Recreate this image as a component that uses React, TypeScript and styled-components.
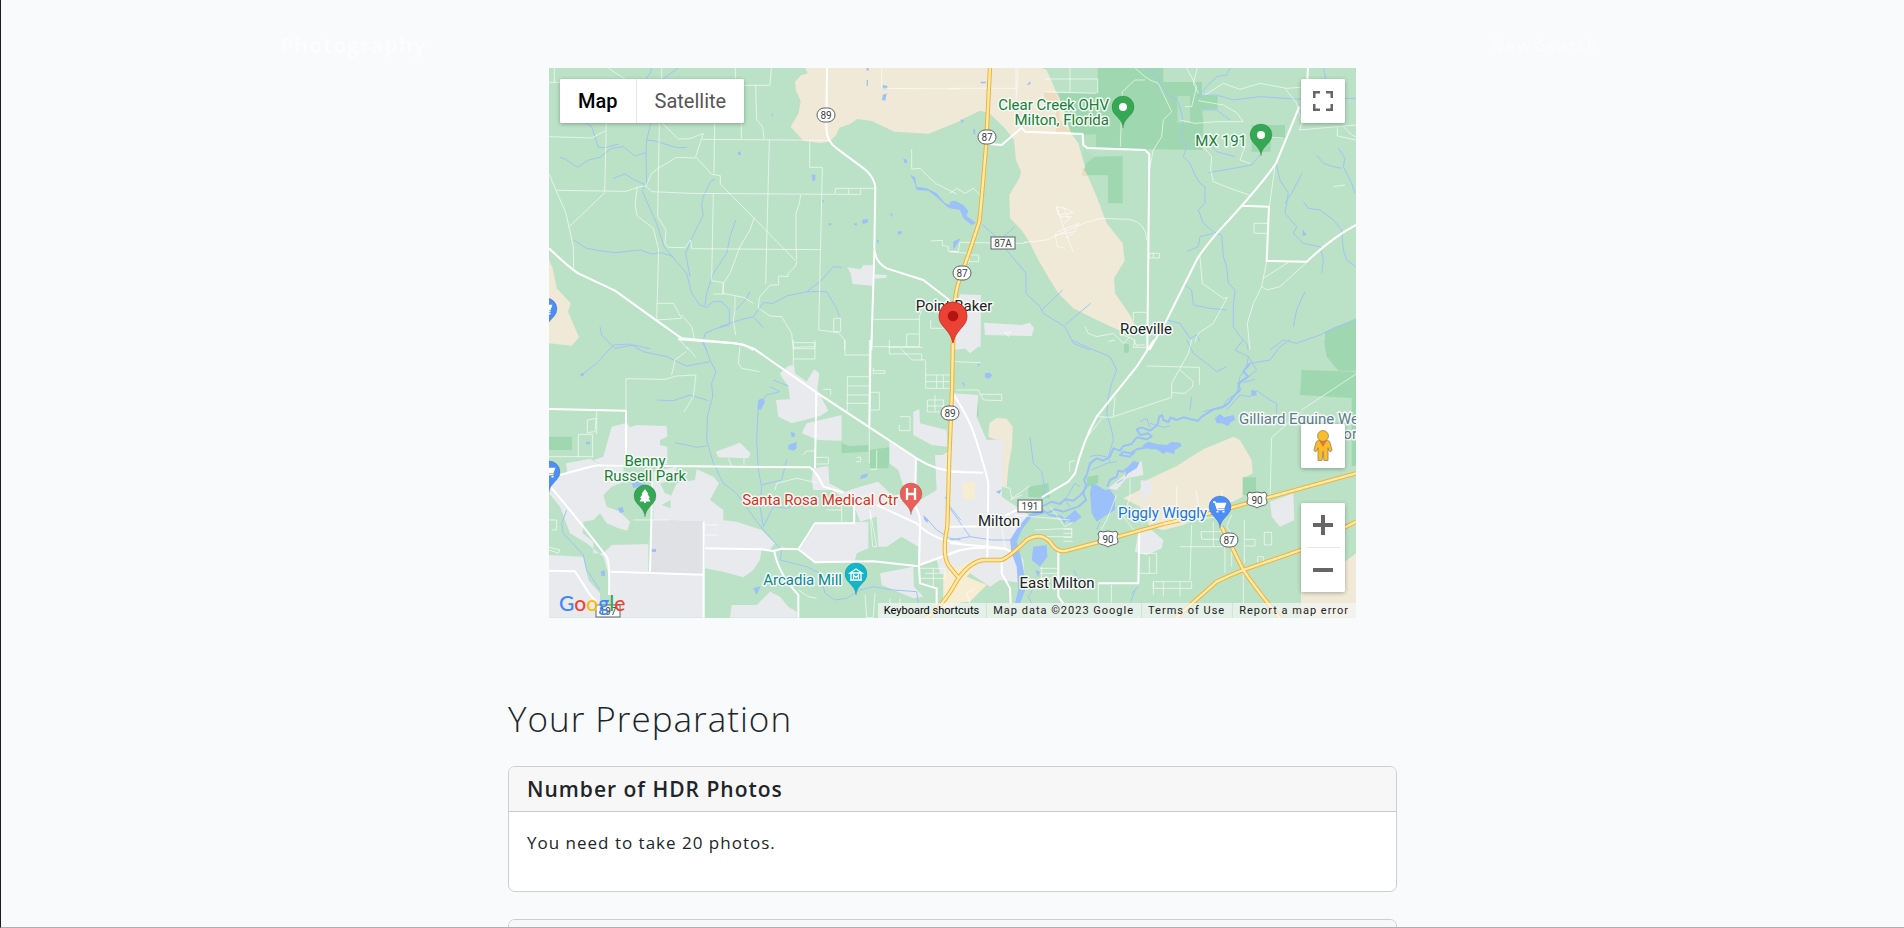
import React from "react";
import styled, { createGlobalStyle } from "styled-components";

const GlobalStyle = createGlobalStyle`
  *, *::before, *::after { box-sizing: border-box; }
  body {
    margin: 0;
    background: #f8fafc;
    color: #212529;
    font-family: "Open Sans", "Noto Sans", sans-serif;
    font-size: 17px;
    line-height: 28px;
    letter-spacing: 1px;
  }
`;

const Page = styled.div`
  position: relative;
  height: 100vh;
  overflow: hidden;
  border-left: 1px solid #1b1b20;
  border-bottom: 1px solid #b0aeb6;
`;

const Header = styled.header`
  display: flex;
  align-items: center;
  justify-content: space-between;
  max-width: 1345px;
  height: 68px;
  margin: 0 auto;
  padding: 22px 27px 0 0;
`;

const Brand = styled.a`
  color: #fcfdfc;
  font-size: 21px;
  font-weight: 700;
  text-decoration: none;
`;

const NavLink = styled.a`
  color: #fcfdfc;
  font-weight: 600;
  text-decoration: none;
`;

const Main = styled.main`
  max-width: 889px;
  margin: 0 auto;
`;

const MapFrame = styled.section`
  position: relative;
  max-width: 807px;
  height: 550px;
  margin: 0 auto 78px;
  overflow: hidden;
  background: #bbe2c6;
  font-family: Roboto, sans-serif;
`;

const MapCanvas = styled.svg`
  display: block;
  width: 100%;
  height: 100%;
  letter-spacing: 0;
`;

const ControlBox = styled.div`
  display: flex;
  overflow: hidden;
  border-radius: 2px;
  background: #fff;
  box-shadow: 0 1px 4px rgba(0, 0, 0, 0.3);
`;

const TypeControls = styled(ControlBox)`
  position: absolute;
  top: 11px;
  left: 11px;
`;

const TypeButton = styled.button<{ $active?: boolean }>`
  height: 44px;
  padding: 0 18px;
  border: 0;
  border-left: ${(p) => (p.$active ? "0" : "1px solid #e6e6e6")};
  background: #fff;
  color: ${(p) => (p.$active ? "#000" : "#565656")};
  font-family: Roboto, sans-serif;
  font-size: 20px;
  font-weight: ${(p) => (p.$active ? 500 : 400)};
`;

const IconButton = styled.button`
  display: grid;
  place-items: center;
  width: 44px;
  height: 44px;
  padding: 0;
  border: 0;
  background: #fff;
`;

const TopRight = styled.div`
  position: absolute;
  top: 11px;
  right: 11px;
`;

const BottomRight = styled.div`
  position: absolute;
  right: 11px;
  bottom: 26px;
  display: flex;
  flex-direction: column;
  gap: 35px;
`;

const ZoomBox = styled(ControlBox)`
  flex-direction: column;
`;

const Divider = styled.hr`
  width: 33px;
  height: 1px;
  margin: 0 auto;
  border: 0;
  background: #e6e6e6;
`;

const GoogleLink = styled.a`
  position: absolute;
  left: 10px;
  bottom: 2px;
  display: flex;
  font-family: Lato, sans-serif;
  font-size: 21px;
  font-weight: 500;
  line-height: 26px;
  letter-spacing: 0;
  text-decoration: none;
`;

const Letter = styled.span<{ $color: string }>`
  color: ${(p) => p.$color};
`;

const Attribution = styled.footer`
  position: absolute;
  right: 0;
  bottom: 0;
  display: flex;
  height: 15px;
  background: rgba(245, 245, 245, 0.72);
  font-size: 11px;
  line-height: 15px;
`;

const ShortcutButton = styled.button`
  padding: 0 7px 0 6px;
  border: 0;
  background: none;
  color: #000;
  font: inherit;
  letter-spacing: 0;
`;

const Credit = styled.span`
  padding: 0 7px 0 6px;
  border-left: 1px solid #cfe6d7;
  color: #222;
`;

const CreditLink = styled.a`
  padding: 0 7px 0 6px;
  border-left: 1px solid #cfe6d7;
  color: #222;
  text-decoration: none;
`;

const Title = styled.h2`
  margin: 0 0 25px;
  font-size: 35px;
  font-weight: 300;
  line-height: 45px;
`;

const Card = styled.article`
  min-height: 126px;
  margin-bottom: 27px;
  overflow: hidden;
  border: 1px solid #cdcecf;
  border-radius: 7px;
  background: #fff;
`;

const CardHeader = styled.h3`
  min-height: 45px;
  margin: 0;
  padding: 8px 18px;
  border-bottom: 1px solid #cacaca;
  background: #f7f7f7;
  font-size: 21px;
  font-weight: 600;
  line-height: 28px;
`;

const CardText = styled.p`
  margin: 0;
  padding: 17px 18px;
  font-weight: 400;
`;

/* The terrain is traced in four sheets, each drawn at three units per pixel. */
type Sheet = "nw" | "ne" | "sw" | "se";
const origin: Record<Sheet, string> = {
  nw: "translate(-9 -8) scale(.333333)",
  ne: "translate(401 -8) scale(.333333)",
  sw: "translate(-9 272) scale(.333333)",
  se: "translate(401 272) scale(.333333)",
};
type Layer = Partial<Record<Sheet, string>>;

const sand: Layer = {
  nw: "M795 24L803 40 783 46 765 66 768 92 782 122 776 160 752 200 790 242 840 249 868 245 888 226 898 203 930 192 952 177 995 183 1064 215 1166 221 1262 182V24ZM27 600L38 625 50 685 92 730 84 755 117 832 95 857 27 850Z",
  ne: "M0 24V195L90 152 118 160 165 205 192 240 198 300 213 335 208 355 178 405 180 475 215 510 240 550 265 600 300 660 325 700 370 745 440 780 510 812 555 795 540 765 495 700 492 655 524 602 518 550 470 490 440 410 410 340 385 250 360 215 355 180 325 110 290 30 275 24Z",
  sw: "M27 0H105L95 12 27 6Z",
  se: "M115 290L118 250 140 234 170 236 188 260 186 320 175 380 170 440 155 440 158 300 135 298ZM520 475L570 450 580 425 680 378 760 328 850 290 870 300 905 360 908 400 880 415 878 470 840 490 790 510 700 555 640 570 600 560 570 500ZM1053 833V750L1100 730 1218 640V833Z",
};
const tan: Layer = {
  ne: "M283 95L320 100 330 180 362 216H318V150L283 135ZM398 320L412 346H396Z",
};
const urban: Layer = {
  nw: "M922 622L962 628 970 616 998 615V677L938 672 932 640ZM1004 643L1040 645V653L1004 656Z",
  ne: "M30 703L93 705 92 860 10 870V760ZM102 788L215 795 240 788 252 805 245 828 105 825Z",
  sw: "M720 100L745 78 762 75 765 100 800 125 822 88 838 100 832 150 865 212 840 228 755 250 715 230 708 180 750 178 745 140 725 110ZM785 280L800 250 905 225V302L835 300ZM527 335L600 308 632 340 625 355 535 352ZM160 360L190 350 215 260 260 248 270 262 290 255 380 258 382 290 360 300V315L382 320V372H180ZM78 370L150 356 185 376H250L252 425 215 440 190 465 200 500 240 515 270 545 262 572 235 565 200 550 180 520 160 540 130 545 128 580 160 605V640H190L215 615 325 612V692L490 700V833H215L205 700 190 650 140 610 90 580 60 500 27 460V420L82 400ZM340 395L410 380 405 420 360 430 375 460 392 465V480L365 495 392 505V540H545L590 545 665 570 705 610 690 628 495 625 490 545 340 540ZM410 430L465 420 470 388 520 410 537 430 510 480 550 510V540H392V470ZM27 645L130 650 145 720 180 760V833H27ZM495 625L665 628 660 660 640 690 610 712 550 695 495 685ZM570 833L575 795 650 795 690 755 720 770 745 800 770 815V833ZM820 385L865 378 868 430 915 455 960 440 1015 425 1060 470 1090 455 1140 480 1190 450 1185 345H1228L1262 400V690L1200 700 1190 660 1135 680V620L1085 590 1040 620H1015L1010 530 960 545 940 490 875 450 820 450 815 420ZM805 590L830 550 985 545V625L950 640 945 662 820 665 780 628ZM1120 215L1138 208 1140 250 1220 270 1222 320 1175 315 1120 285ZM1048 305L1125 355 1128 440H1090L1075 390 1048 370ZM1020 700L1120 680 1122 740 1150 770 1120 775 1025 735Z",
  se: "M10 160L85 165 80 230 110 300 160 298 155 470 200 500 245 530 180 600 220 660 225 730 150 720 120 740 60 700 -30 700V350L0 330ZM30 0H90L88 18 60 40 45 25ZM572 420L605 425 602 465 580 475 575 560ZM565 575L605 570 640 600 635 625 590 645 555 635ZM960 485L1030 460 1033 540 990 560 965 530ZM475 445L575 362 580 405 530 415 500 450Z",
};
const airport: Layer = { sw: "M333 540L492 545V705L330 698Z" };
const downtown: Layer = {
  sw: "M1215 720L1250 690 1262 790 1150 833 1210 780Z",
  se: "M38 430L75 425V480L38 475ZM-20 700L70 660 75 680 50 710 110 735 60 785 -20 790Z",
};
const parks: Layer = {
  ne: "M443 24H640V66H756V148L760 185 758 270 600 268 410 262 400 225 362 217 350 180 325 100H443ZM433 290L518 288V430H474V346H398L408 310ZM905 195H1005V235H962V275H905ZM756 108H803V148H756ZM1125 870V815L1218 775V870ZM522 855H536V870H522Z",
  sw: "M27 290H96V330H27ZM905 308L925 318 985 315V335L905 340ZM988 330L1055 320 1045 385 990 385ZM275 400H330V425H280ZM1155 590L1180 575 1184 600 1175 625Z",
  se: "M1055 90L1218 95V175L1050 165ZM1122 0H1218V92H1165L1130 50ZM878 412H918V465H878ZM55 190H85V230L60 222ZM235 440L295 430 300 475 235 470ZM522 12H536V38H522ZM1205 175H1218V378H1205ZM410 410L445 405V430L412 440ZM0 310L18 315V352H0ZM40 312L60 305 75 330 40 335ZM50 642H68V658H50Z",
};
const clearings: Layer = {
  ne: "M682 108H720V188H682ZM400 265L433 290 404 310ZM438 222V262H410L400 225Z",
};
const lakes: Layer = {
  nw: "M1110 345L1125 352 1130 380 1160 385 1190 400 1215 430 1230 435 1240 422 1260 430V445L1225 443 1190 412 1165 392 1130 390 1122 362ZM815 345L826 343V360L817 363ZM966 480L985 476 982 488 968 492ZM1072 515L1085 513V521L1076 524ZM1090 295L1100 300 1102 310 1093 308ZM1028 75L1043 78 1040 88H1028ZM1028 105L1040 100 1036 122 1026 120ZM1240 545L1262 535 1242 568ZM594 275H602V285H594ZM1010 538L1017 542 1014 553ZM1050 460L1058 463 1055 472ZM943 490H951V496H943ZM866 490H874V496H866ZM695 160L702 167H695ZM980 60H984V78H980ZM980 24H986V32H980ZM845 418L852 422 849 429Z",
  ne: "M0 425L15 422 40 435 55 452 50 468 78 488 65 495 40 475 30 450 0 445ZM10 545L22 540 10 570ZM230 76L240 64 242 72ZM92 65H108V70H92ZM1058 508L1070 525 1058 527ZM32 178L42 182 34 190ZM70 205L76 210V225L70 220Z",
  sw: "M655 180L668 175 675 185 662 210 652 205ZM752 275L765 280V290L755 292ZM745 315L770 305V325L760 332 745 328ZM120 102L130 98 132 106 123 110ZM234 505L248 500 252 515 240 520ZM275 430L292 425 325 435 328 445 300 438 280 445ZM335 627H348V636H335ZM965 405L985 400 980 412 960 418ZM1150 525L1165 540 1162 548 1153 540ZM640 745L662 738 650 765ZM138 305H150V313H138ZM182 695L195 690 195 708H184Z",
  se: "M425 430L440 435 465 450 480 448 495 470V510L470 525 440 545 425 520 420 460ZM250 620L290 615 292 650 270 680 245 660ZM575 318L595 305 620 312 650 315 665 305 690 308 695 318 675 330 672 342 650 335 640 342 620 328 600 328ZM180 600L205 560 235 525 275 505 285 520 245 530 215 570 200 605 215 660 230 740 210 790 195 790 205 750 200 680 185 640ZM795 235L810 222 822 232 850 225 855 240 840 248 835 258 815 250 800 250ZM340 540L375 510 395 530 370 550ZM530 385L550 362 568 368 560 385 535 400 525 412ZM105 100L120 98 127 107 115 116 105 112ZM138 455L155 448 148 462ZM255 690L270 695 265 712ZM85 70L90 74 84 82ZM36 130L42 125 44 142ZM903 150L918 152 920 166 906 168Z",
};
const streams: Layer = {
  nw: "M320 375L318 280 320 240 332 190M335 24L330 40 318 56M415 24L370 56M60 292L75 297 113 322 145 300 180 292 215 265 250 260 285 288 318 278M140 190L155 200 175 262 200 262 235 252M320 240L345 243 410 263 440 262M220 355L255 342 280 358 312 372M312 372L308 395 325 435 350 490 372 560 405 600 440 640 455 700 480 735 500 742 520 725 545 725 568 750V795L530 805 495 820 488 850 500 870M100 540L140 565 180 572 225 578 300 570 335 582 365 578 400 590M525 357L512 365 490 410 485 435 490 465 455 535 437 580 450 650M587 480L570 530 560 580 520 640 500 700 495 735M905 622L880 620 840 665 800 695 740 708 700 730 670 728 640 770 605 778 540 800M800 695L860 695 890 745 898 770M630 695L620 715 585 752M640 770L670 803M180 800L185 825 225 865 280 855 330 866",
  ne: "M590 24L620 45 630 60 625 80 660 110 685 125 695 160 700 200 690 230 710 260 700 290 720 310 735 345 750 370 765 380V430L745 450 760 490 790 515 815 525 820 590 830 620 835 670 855 690 850 740 850 800 870 830 890 850 895 870M840 24L830 45 800 50 770 80 745 108 800 105 850 120 930 110 1053 118M1185 115H1218M1120 24L1128 57M740 225L770 240 800 275 855 290M775 338L850 325 905 315 930 285M755 150L800 150 840 180M978 310L990 360 1015 400 1005 460 1040 500 1030 520 1060 550 1110 560 1120 600 1115 640M1057 338L1025 400 1005 430M1100 285L1120 310 1150 320 1175 325M1165 265L1185 295 1180 320 1205 370 1215 400M1060 425L1075 445 1110 450 1150 480 1175 510 1180 570 1190 600 1218 620M95 492L150 540 195 500M170 570L228 640V700L270 740 280 760 345 800 370 850 420 870M275 750L338 690M345 795L422 730M710 575L745 560 750 530 790 520M705 675L725 690 730 735 780 745 830 750M650 780L690 790 720 835 740 825 750 845M1218 785L1160 800 1110 825 1040 850 1000 840 960 870M1065 695L1040 750 1030 800",
  sw: "M490 6L510 60 528 95 515 130 518 170 502 230 500 300 520 370 550 430 590 460 640 530 670 570 725 630 720 660 800 680 840 700 855 760 885 780 920 775 960 750 1000 740 1060 750 1130 755 1135 790M125 105L170 70 220 15 270 12 310 35 380 50 440 78 510 65M350 180L400 182 450 165 505 182M405 308L440 315 470 322 500 318M690 140L720 155 680 165 655 200 650 300 655 390 665 440 660 500 670 560M740 358L725 420 665 435M780 490L740 505 700 500 690 520 670 560M80 510L65 550 70 580 130 645 140 690 180 750M1155 530L1190 570 1230 595 1262 600M1215 470L1230 500 1262 540M700 120L745 138",
  se: "M365 0L420 25 480 50 500 90 485 130 475 170 470 220 485 270 490 300 475 350M710 0L730 40 770 70 800 95 830 80M880 0L855 30 895 50 890 80 870 110 860 160 830 180 820 200 760 215M960 60L990 20 1020 0M960 60L900 70M915 118L880 128M895 50L920 90 870 130M925 150L900 170 870 165 830 210M925 155L960 180 980 190V240M240 290L250 370 275 395 285 450 280 480M425 390L470 370 500 365M0 505L60 590 0 600M60 590L125 600 180 600M725 170L720 210M545 760L565 740M555 750L540 790M290 740L260 730 235 770 260 820M370 690L400 740M420 350L440 345 470 350 480 365M390 440L375 430 345 480 360 500M450 545L440 570M500 430L520 418M570 245L590 235 600 262M600 250L640 262 660 258",
};
const rivers: Layer = {
  se: "M900 70L880 95 895 110 865 130 870 150 850 170 835 190 818 202 790 208 755 230 745 242 722 238 700 232 680 240 662 232 655 246 640 240 636 225 628 230 622 255 600 272 575 262 560 268 570 285 595 280 605 290 590 298 560 292 545 312 520 318 510 332 490 325 480 350 460 362 440 355 420 370 412 400 402 420 410 440 392 465 370 482 345 478 330 492 305 485 275 500M600 320L560 328 540 340 520 335 510 345 540 350 555 335M410 430L400 460 408 480 385 500 340 515 315 508 290 520M540 380L520 395 505 392 500 410 480 420 472 440M240 490L270 505 300 525 335 530 345 548",
};
const minorRoads: Layer = {
  nw: "M43 24V67M27 67H60M204 24L255 57M365 24V57M586 24V57M694 24L690 76H612M647 76L650 180 668 200 672 238M27 230L155 234 197 212M199 189L194 395M487 238L868 241M367 190L415 237 450 236 490 220 467 290 515 343 541 347V372L770 605 765 620 745 640 744 650 716 648V675L690 675 658 712 655 745 690 768 725 770 755 820 760 870M467 294L410 292 355 325 335 340 318 378 335 395 455 400 885 403M50 391L258 394 300 380 318 378M195 397L88 500M27 342L78 460 100 560 101 625M292 380L285 435 292 468 340 505 356 570 350 780M358 190L353 470 378 510 375 550 385 562 435 563 452 540 455 566 840 569M524 190L522 340M604 190V238M520 400L515 662 550 668V702H520M643 473L630 510 600 560 570 640 550 670 548 700 610 712 640 730M688 240L677 672M782 405L778 430 768 460V545L770 600M809 245V322H847L836 810 895 818 914 840V870M886 402V385H1003M887 403H962V386M926 386V402M1025 24V85L1262 87M1115 267V327L1140 325 1165 350 1190 372 1250 402M350 780L425 775 400 730H350M425 765L455 800 463 835M445 870L415 835M585 710V750L580 780 587 825M883 775H902V815H881V775M1172 543L1207 541V556L1225 560V575H1255M1000 778H1138M1145 752L1138 770V860H1000M1172 780V805H1210M1138 822H1100V860M762 848H825V866H762",
  ne: "M0 85H198M205 24L198 118M198 24V90M283 95L438 100M360 24V95M286 57H443V100M585 60L555 60 517 95 511 260M555 24L585 50 600 60 625 70 665 155 640 180 635 230 610 270 598 330M710 24L740 80 725 140H705M742 24L730 70 745 100M765 105L820 70 870 88 930 70 1010 85 1052 82M745 122L820 135 860 158 880 185 800 185 735 190 690 180M760 260L785 290 782 330 790 365 840 385 898 405M930 230L1000 234M900 310L870 300 885 260M1005 85L1040 130 1055 190 1048 210 1218 195M1162 200V228L1218 240M975 320L958 440M912 490H955V520H912ZM0 400L20 385 45 400 70 385 90 405M0 575H25L30 547 218 550 230 545M0 575L55 580V610M58 585H86V605H58ZM220 548L290 540 400 490 450 475 540 478 Q590 490 590 540M598 580H628V594H598ZM610 577V594M750 590L757 670 820 715 832 712 790 790 745 820 735 845M950 603L935 680 950 690 990 680 1070 607M940 655L1015 607M935 680L910 730 892 790 900 870M590 757H550V782M405 800L415 820 440 830 490 820 520 850 540 830M590 862H550L555 840 520 825M165 815L175 830 182 815 165 820ZM1185 375L1150 380M1218 230L1205 225 1180 200M320 440L340 500 370 577M318 440L325 465 370 458 345 445ZM330 470L365 470 342 490M322 515L388 490M315 525L375 515 385 488M315 520L322 560 345 565M345 535L370 520M340 440L355 478",
  sw: "M258 212V116L375 118 410 108 468 105 460 170 432 215M395 105L405 60 438 35M440 20L468 52M600 20L595 70 605 85 658 95M760 75V0M760 22L825 20V0M760 57H825L825 25M850 148H872V165M922 110H988M922 138H988M920 165H985M918 190H990M922 215V110M988 0V370M915 0V45H990M1000 92H1035V100H998M1000 84V98M993 157H1018V210H992M1048 0V42H1145V60H1157M1157 62V145H1230M1190 105V145M1157 125H1230M1157 105H1230M1210 105V145M1045 22H1148M1082 25L1115 60H1145M1162 180H1210V216H1162ZM1185 165V215M1162 198H1210M1080 230H1110V272H1078V255M115 352V283H158V352M142 240L168 235 165 275 142 278ZM170 212V283M27 350H158M825 352H865V372H830M790 345L800 333H825M705 450L710 430 770 415 830 428M565 355L575 378M612 352V375M27 540H50V570H35M27 622L60 630 55 640 27 630M990 510L1010 620H998L990 515M945 490V550M905 495V545M860 510H905M775 750L805 770 830 775M975 765L980 833H1000L1005 760M280 540H390M495 555H535M495 585H535M1138 685H1215V715H1138M1180 685V740M1155 700H1210M1050 775V833M1080 775V833M950 352H962V365H948M990 388H1010V330",
  se: "M15 65L92 68M18 150L85 150 100 180 155 182V163H90M590 78L748 82V135M725 0L715 40 690 85 665 130 665 172 490 230 495 170M690 90L730 125 728 140 705 160 665 158M490 232L440 230 405 305M460 230L405 300M1218 102L1055 210M1055 215L965 292 960 480M160 440L180 445 185 475 240 438M180 480L215 465M359 395V365L375 362M155 560L165 625M190 525L360 540M255 570L365 565V590H260M340 568H368M340 580H368M340 592H368M340 604H368M725 555L720 720M610 725H725V745H610ZM610 725V765M640 725V770M690 725V770M753 575H820V598H755ZM790 545V620M825 590V700M845 620V680M883 540V670M883 598H915V618H885M943 577H965V615H943ZM923 650H940V668H923ZM880 690V790M445 730V790M565 640H620V700H570M484 735V790M270 685H325M270 700H325M270 715H325M275 680V740M560 15H585M475 5L495 0M552 0L560 20M540 415V470M500 465L470 540 450 575M598 650V700M680 440V510M738 450L745 500M815 450V490M60 790L50 760 75 745M540 470L520 530 555 575M300 500L345 560 370 545M820 620H690M720 540L810 530M845 525L830 560 850 590",
};
const mainRoads: Layer = {
  nw: "M861 24L859 205Q860 245 890 265L975 328Q1005 355 1006 385L1003 560Q1003 605 1040 625L1150 660 1228 720M27 565Q90 625 115 640L225 692 350 782 425 835 585 850Q620 855 640 870M1003 570L994 870",
  ne: "M105 250L120 252 155 255 215 203 225 215 398 222 400 255 412 264 585 270 598 282 592 870M1074 24L1072 60M1048 140L978 310Q930 380 800 520Q750 580 740 600L650 780 598 870M875 437L957 440 950 603 1070 605Q1150 530 1218 495",
  sw: "M415 -2L580 10Q610 12 640 25L829 157 1130 355Q1190 395 1262 395M27 207L258 212V375M60 405Q150 380 175 376L810 382Q830 395 850 440L910 458M27 435Q90 510 130 560L200 650Q210 665 207 765M495 625L665 628 700 633 725 626 775 628 825 667 1000 664 1130 678Q1180 660 1262 630M775 628L800 590 825 550 942 550V490M703 635Q715 700 775 765V833M491 545V833M337 425L330 695M212 695L490 704M27 692L105 694 150 765 170 785M829 157L825 385M992 0L988 260M1128 355L1126 450M1010 495L1130 550Q1180 600 1262 610M1125 500Q1142 520 1140 560L1137 680 1140 730 1190 745V800",
  se: "M12 165Q60 240 75 290Q110 400 115 430L112 655M0 395L100 398M-5 560L205 558M0 610L165 625 190 640M0 640Q60 615 165 627M612 0L560 80 440 230Q400 300 375 400L355 425 275 472M200 510L165 527M155 660V700L180 745 182 790M325 635V770L340 790M568 575L565 730H445",
};
const highways: Layer = {
  ne: "M120 24L108 260Q95 420 88 485L60 570 25 670Q10 710 9 870",
  sw: "M1239 -10L1236 150 1228 350 1222 560Q1205 640 1225 675Q1245 702 1256 712",
  se: "M-80 840Q-20 800 22 720Q60 665 100 660L155 660Q180 650 230 600Q270 575 300 605Q320 640 350 632L440 608 640 552 800 515 920 482 1218 400M670 840L800 725Q840 705 880 690L1053 630 1218 545M815 560L880 690Q920 750 995 840",
};

type DrawnLayerProps = { layer: Layer } & React.SVGProps<SVGPathElement>;
const DrawnLayer = ({ layer, ...rest }: DrawnLayerProps) => (
  <>
    {(Object.keys(layer) as Sheet[]).map((sheet) => (
      <path key={sheet} d={layer[sheet]} transform={origin[sheet]} strokeLinejoin="round" {...rest} />
    ))}
  </>
);

type PinProps = { x: number; y: number; color: string; children?: React.ReactNode };
const Pin = ({ x, y, color, children }: PinProps) => (
  <g transform={`translate(${x} ${y})`}>
    <path
      d="M0 0C-1-7-4-9-8-13.5A11 11 0 1 1 8-13.5C4-9 1-7 0 0Z"
      fill={color}
      stroke="#000"
      strokeOpacity=".18"
      strokeWidth=".7"
    />
    {children}
  </g>
);

const Cart = () => (
  <g stroke="#fff" strokeWidth="1.300" fill="none">
    <path d="M-7-26H-5L-2.500-18.500H4.500" />
    <path d="M-4-24.500H5.500L4-20.500H-3Z" fill="#fff" />
    <path d="M-2.500-17V-15.500M3.500-17V-15.500" strokeWidth="2" />
  </g>
);

const PlaceText = styled.text<{ $fill?: string }>`
  fill: ${(p) => p.$fill ?? "#202124"};
  stroke: #f6fbf7;
  stroke-width: 3px;
  stroke-linejoin: round;
  paint-order: stroke;
  font-family: Roboto, sans-serif;
  font-size: 15px;
`;

const ShieldText = styled.text`
  fill: #3c4043;
  font-family: Roboto, sans-serif;
  font-size: 10px;
  text-anchor: middle;
`;

type ShieldProps = { x: number; y: number; kind: "state" | "us" | "county"; label: string };
const Shield = ({ x, y, kind, label }: ShieldProps) => (
  <g transform={`translate(${x} ${y})`}>
    {kind === "state" && <rect x="-9" y="-7" width="18" height="14" rx="7" fill="#fff" stroke="#5f6368" />}
    {kind === "us" && (
      <path
        d="M-8-8L-5-7 0-8 5-7 8-8 10-5C8-1 10 0 10 3C9 6 4 5 0 8C-4 5-9 6-10 3C-10 0-8-1-10-5Z"
        fill="#fff"
        stroke="#5f6368"
      />
    )}
    {kind === "county" && <rect x="-12" y="-6" width="24" height="12" fill="#fff" stroke="#5f6368" />}
    <ShieldText y="4">{label}</ShieldText>
  </g>
);

const Terrain = () => (
  <MapCanvas viewBox="0 0 807 550" preserveAspectRatio="xMidYMid slice" role="img" aria-label="Map of Milton, Florida">
    <rect width="807" height="550" fill="#bbe2c6" />
    <DrawnLayer layer={sand} fill="#f0e9d8" />
    <DrawnLayer layer={parks} fill="#9fd8b0" />
    <DrawnLayer layer={tan} fill="#efdcc0" />
    <DrawnLayer layer={clearings} fill="#b4dfc0" />
    <DrawnLayer layer={urban} fill="#e8eaed" />
    <DrawnLayer layer={airport} fill="#e0e1e4" />
    <DrawnLayer layer={downtown} fill="#f6edd2" />
    <DrawnLayer layer={streams} fill="none" stroke="#9fc4f7" strokeWidth="3" />
    <DrawnLayer layer={rivers} fill="none" stroke="#9cc0f9" strokeWidth="6" />
    <DrawnLayer layer={lakes} fill="#9cc0f9" />
    <DrawnLayer layer={minorRoads} fill="none" stroke="#fff" strokeOpacity=".72" strokeWidth="2.500" />
    <DrawnLayer layer={mainRoads} fill="none" stroke="#fff" strokeWidth="6" />
    <DrawnLayer layer={highways} fill="none" stroke="#f4b12c" strokeWidth="13" />
    <DrawnLayer layer={highways} fill="none" stroke="#ffebae" strokeWidth="7" />

    <Shield x={277} y={47} kind="state" label="89" />
    <Shield x={438} y={69} kind="state" label="87" />
    <Shield x={454} y={175} kind="county" label="87A" />
    <Shield x={413} y={205} kind="state" label="87" />
    <Shield x={401} y={345} kind="state" label="89" />
    <Shield x={481} y={438} kind="county" label="191" />
    <Shield x={559} y={471} kind="us" label="90" />
    <Shield x={708} y={432} kind="us" label="90" />
    <Shield x={680} y={472} kind="state" label="87" />
    <Shield x={59} y={543} kind="county" label="197" />

    <PlaceText x="560" y="42" textAnchor="end" $fill="#188038">Clear Creek OHV</PlaceText>
    <PlaceText x="560" y="57" textAnchor="end" $fill="#188038">Milton, Florida</PlaceText>
    <PlaceText x="698" y="78" textAnchor="end" $fill="#188038">MX 191</PlaceText>
    <PlaceText x="405" y="243" textAnchor="middle">Point Baker</PlaceText>
    <PlaceText x="597" y="266" textAnchor="middle">Roeville</PlaceText>
    <PlaceText x="690" y="356" $fill="#5f7d8c">Gilliard Equine We</PlaceText>
    <PlaceText x="808" y="371" textAnchor="end" $fill="#5f7d8c">or</PlaceText>
    <PlaceText x="96" y="398" textAnchor="middle" $fill="#188038">Benny</PlaceText>
    <PlaceText x="96" y="413" textAnchor="middle" $fill="#188038">Russell Park</PlaceText>
    <PlaceText x="349" y="437" textAnchor="end" $fill="#d93025">Santa Rosa Medical Ctr</PlaceText>
    <PlaceText x="293" y="517" textAnchor="end" $fill="#0b8793">Arcadia Mill</PlaceText>
    <PlaceText x="658" y="450" textAnchor="end" $fill="#1a73e8">Piggly Wiggly</PlaceText>
    <PlaceText x="450" y="458" textAnchor="middle">Milton</PlaceText>
    <PlaceText x="508" y="520" textAnchor="middle">East Milton</PlaceText>

    <Pin x={574} y={60} color="#34a853"><circle cy="-21" r="4" fill="#fff" /></Pin>
    <Pin x={712} y={88} color="#34a853"><circle cy="-21" r="4" fill="#fff" /></Pin>
    <Pin x={96} y={449} color="#34a853">
      <path d="M0-28L3.500-23H2.500L5-19H3.500L5.500-15.500H1V-14H-1V-15.500H-5.500L-3.500-19H-5L-2.500-23H-3.500Z" fill="#fff" />
    </Pin>
    <Pin x={362} y={447} color="#ea6059">
      <path d="M-4-27V-15M4-27V-15M-4-21H4" fill="none" stroke="#fff" strokeWidth="2.300" />
    </Pin>
    <Pin x={307} y={527} color="#12b5cb">
      <path d="M-6-22L0-26 6-22ZM-5-22V-15M5-22V-15M-6-15H6M-2.500-16V-20L0-17.500 2.500-20V-16" fill="none" stroke="#fff" strokeWidth="1.300" />
    </Pin>
    <Pin x={671} y={460} color="#4c8df6"><Cart /></Pin>
    <Pin x={0} y={425} color="#4c8df6"><Cart /></Pin>
    <Pin x={-3} y={262} color="#4c8df6"><Cart /></Pin>

    <g transform="translate(404 275)">
      <path
        d="M0 0C-2-9-6-12-10-17C-12.500-20-14-23-14-27A14 14 0 0 1 14-27C14-23 12.500-20 10-17C6-12 2-9 0 0Z"
        fill="#ea4335"
        stroke="#c5221f"
        strokeWidth=".8"
      />
      <circle cy="-27" r="5.300" fill="#b31412" />
    </g>
  </MapCanvas>
);

const Pegman = () => (
  <svg width="20" height="34" viewBox="0 0 22 36" aria-hidden="true">
    <path
      d="M6 12H16C18 12 19 14 19.500 17L21 23C20 25 18 24 17.500 23L16.500 20V34H12L11 24 10 34H5.500V20L4.500 23C4 24 2 25 1 23L2.500 17C3 14 4 12 6 12Z"
      fill="#fbbc2c"
      stroke="#8a7a5a"
      strokeWidth=".8"
    />
    <path d="M7 12.500H15L11 19Z" fill="#e37a2c" />
    <circle cx="11" cy="7" r="6" fill="#fbbc2c" stroke="#8a7a5a" strokeWidth=".8" />
  </svg>
);

const logo: [string, string][] = [
  ["G", "#4285f4"],
  ["o", "#ea4335"],
  ["o", "#fbbc05"],
  ["g", "#4285f4"],
  ["l", "#34a853"],
  ["e", "#ea4335"],
];

export default function App() {
  return (
    <Page>
      <GlobalStyle />
      <Header>
        <Brand href="#">Photography</Brand>
        <NavLink href="#">New Search</NavLink>
      </Header>
      <Main>
        <MapFrame>
          <Terrain />
          <TypeControls>
            <TypeButton type="button" $active>Map</TypeButton>
            <TypeButton type="button">Satellite</TypeButton>
          </TypeControls>
          <TopRight>
            <ControlBox>
              <IconButton type="button" aria-label="Toggle fullscreen view">
                <svg width="20" height="20" viewBox="0 0 20 20" fill="none" stroke="#666" strokeWidth="2.500">
                  <path d="M1.250 7V1.250H7M13 1.250H18.750V7M18.750 13V18.750H13M7 18.750H1.250V13" />
                </svg>
              </IconButton>
            </ControlBox>
          </TopRight>
          <BottomRight>
            <ControlBox>
              <IconButton type="button" aria-label="Open Street View">
                <Pegman />
              </IconButton>
            </ControlBox>
            <ZoomBox>
              <IconButton type="button" aria-label="Zoom in">
                <svg width="20" height="20" viewBox="0 0 20 20" stroke="#666" strokeWidth="4">
                  <path d="M0 10H20M10 0V20" />
                </svg>
              </IconButton>
              <Divider />
              <IconButton type="button" aria-label="Zoom out">
                <svg width="20" height="20" viewBox="0 0 20 20" stroke="#666" strokeWidth="4">
                  <path d="M0 10H20" />
                </svg>
              </IconButton>
            </ZoomBox>
          </BottomRight>
          <GoogleLink href="#" aria-label="Google">
            {logo.map(([char, color], i) => (
              <Letter key={i} $color={color}>{char}</Letter>
            ))}
          </GoogleLink>
          <Attribution>
            <ShortcutButton type="button">Keyboard shortcuts</ShortcutButton>
            <Credit>Map data ©2023 Google</Credit>
            <CreditLink href="#">Terms of Use</CreditLink>
            <CreditLink href="#">Report a map error</CreditLink>
          </Attribution>
        </MapFrame>
        <Title>Your Preparation</Title>
        <Card>
          <CardHeader>Number of HDR Photos</CardHeader>
          <CardText>You need to take 20 photos.</CardText>
        </Card>
        <Card>
          <CardHeader />
        </Card>
      </Main>
    </Page>
  );
}
